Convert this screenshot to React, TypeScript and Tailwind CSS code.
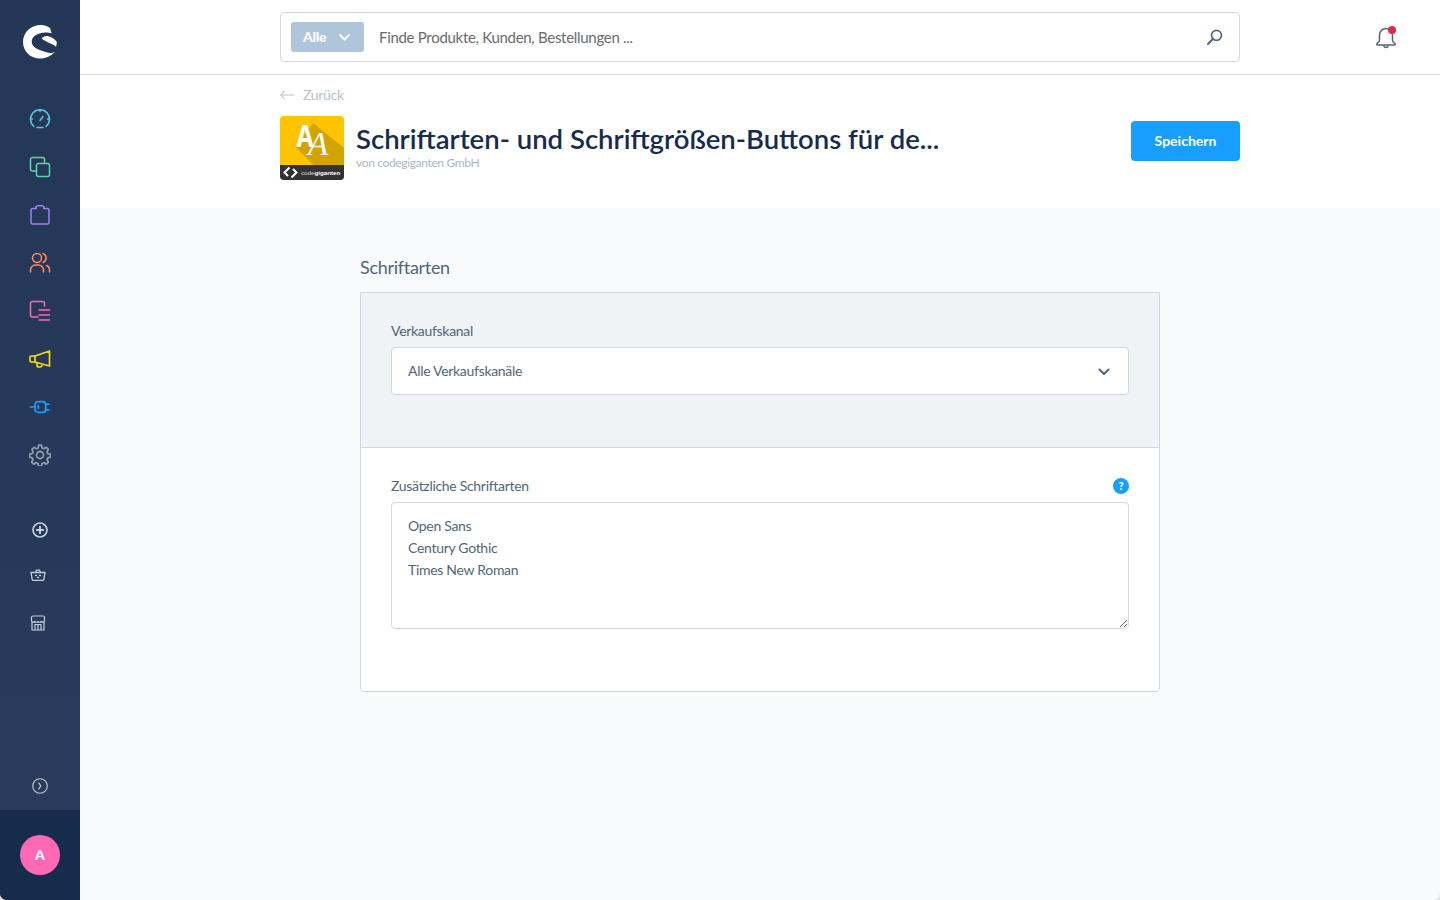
const font = "font-['Lato','Noto_Sans',sans-serif]";

function ShopLogo() {
  return (
    <svg width="36" height="36" viewBox="0 0 36 36" fill="#fff">
      <path d="M19 1C9 1 1 8 1 18c0 10 8 16.500 17 16.500 6 0 11-2.500 15-6.800-3 1.800-6.500 1.300-9 .300C16 26 9.700 23 9.700 17.700 9.700 12 17 8.500 23 8.500c3 0 5 .5 6.700.8L28 4c-2.500-2-6-3-9-3z" />
      <path d="M19.700 14.300C22 12 25 11.500 27 12.500c3 1 6 2.500 7.700 5.200.3 1.800-.2 3.300-.7 5C31 20 27 19 24.700 17.700c-2.200-1.200-4.200-1.900-5-3.400z" />
    </svg>
  );
}

function NavIcon({ color, width = 1.5, children }: { color: string; width?: number; children: React.ReactNode }) {
  return (
    <svg width="22" height="22" viewBox="0 0 22 22" fill="none" stroke={color} strokeWidth={width} strokeLinecap="round" strokeLinejoin="round">
      {children}
    </svg>
  );
}

function Sidebar() {
  return (
    <aside className="w-20 shrink-0 flex flex-col items-center bg-gradient-to-b from-[#243757] to-[#2a3b5c] rounded-bl-[7px] overflow-hidden">
      <div className="h-[108px] flex items-start pt-[24px] justify-center"><ShopLogo /></div>
      <nav className="flex flex-col items-center gap-[26px]">
        <NavIcon color="#57c7e8">
          <path d="M5 18.500A9.500 9.500 0 1 1 17 18.500" />
          <path d="M11 1.500v2M1.500 11h2M18.500 11h2M11 12.500l3-4M8 19.500h6" />
        </NavIcon>
        <NavIcon color="#57d9a3">
          <path d="M7 15H3.500a2 2 0 0 1-2-2V3.500a2 2 0 0 1 2-2h10a2 2 0 0 1 2 2V7" />
          <rect x="7.500" y="7.500" width="13" height="13" rx="2" />
        </NavIcon>
        <NavIcon color="#9a85ef">
          <path d="M7 4.500H3.500A1.500 1.500 0 0 0 2 6v12.500A1.500 1.500 0 0 0 3.500 20h15a1.500 1.500 0 0 0 1.500-1.500V6a1.500 1.500 0 0 0-1.500-1.500H15" />
          <path d="M7 4.500V3.500a1.800 1.800 0 0 1 1.800-1.800h4.400A1.800 1.800 0 0 1 15 3.500v1" />
        </NavIcon>
        <NavIcon color="#ff8a5c">
          <circle cx="8" cy="6" r="4.500" />
          <path d="M1.500 20v-2a5 5 0 0 1 5-5h3a5 5 0 0 1 5 5v2M14 1.500a4.800 4.800 0 0 1 0 9M17.500 13.500A4.500 4.500 0 0 1 20.500 18v2" />
        </NavIcon>
        <NavIcon color="#ff68b4">
          <path d="M9 17H3.500a2 2 0 0 1-2-2V3.500a2 2 0 0 1 2-2h10a2 2 0 0 1 2 2V6" />
          <path d="M10 10h10.500M10 15h10.500M10 20h10.500" />
        </NavIcon>
        <NavIcon color="#ffd700" width={1.7}>
          <path d="M20.500 3v15L6 14H2.500a1.500 1.500 0 0 1-1.500-1.500v-3A1.500 1.500 0 0 1 2.500 8H6z" />
          <path d="M6 8v6M8 15v2a2 2 0 0 0 2 2h1a2 2 0 0 0 2-1.500" />
        </NavIcon>
        <NavIcon color="#189eff" width={1.7}>
          <rect x="6" y="5.700" width="10.700" height="10.700" rx="3" />
          <path d="M1.500 11H6M16.700 8.200h3M16.700 13.800h3M9.300 9.700v2.600" />
        </NavIcon>
        <NavIcon color="#8c9bb0" width={1.8}>
          <circle cx="11" cy="11" r="3.500" />
          <path d="M9.500 1.200h3l.6 2.700 1.800.8 2.400-1.400 2.100 2.100-1.400 2.400.8 1.800 2.700.6v3l-2.700.6-.8 1.800 1.400 2.400-2.100 2.100-2.400-1.400-1.800.8-.6 2.700h-3l-.6-2.700-1.800-.8-2.400 1.400-2.100-2.100 1.400-2.400-.8-1.800-2.700-.6v-3l2.700-.6.8-1.800L3 5.400l2.100-2.100 2.400 1.400 1.800-.8z" />
        </NavIcon>
      </nav>
      <div className="flex flex-col items-center mt-[56px]">
        <svg width="16" height="16" viewBox="0 0 16 16" fill="none" stroke="#c3cedb" strokeWidth="1.700" strokeLinecap="round">
          <circle cx="8" cy="8" r="7" />
          <path d="M8 4.800v6.400M4.800 8h6.400" strokeWidth="2" />
        </svg>
        <svg width="16" height="12" viewBox="0 0 16 12" fill="none" stroke="#c3cedb" strokeWidth="1.300" strokeLinecap="round" strokeLinejoin="round" className="mt-[31px] mr-[4px]">
          <path d="M1 3.500h14l-1.200 7a1 1 0 0 1-1 .8H3.200a1 1 0 0 1-1-.8z" />
          <path d="M5.500 3.500 6.500 1.200h3l1 2.300M5.500 6.500h1M9.500 6.500h1M7.500 8.500h1" />
        </svg>
        <svg width="16" height="16" viewBox="0 0 16 16" fill="none" stroke="#c3cedb" strokeWidth="1.200" strokeLinejoin="round" className="mt-[34px] mr-[4px]">
          <path d="M1.500 5.500v-3a1.500 1.500 0 0 1 1.500-1.500h10a1.500 1.500 0 0 1 1.500 1.500v3c0 2-2.300 2-3.250 1-.9 1-2.400 1-3.250 0-.9 1-2.400 1-3.250 0-1 1-3.250 1-3.250-1z" />
          <path d="M2 7v8h12V7M5 15V9.500h6V15M8 9.500V15" />
        </svg>
      </div>
      <div className="mt-auto h-[57px] flex items-center justify-center pt-[9px]">
        <svg width="16" height="16" viewBox="0 0 16 16" fill="none" stroke="#c3cedb" strokeWidth="1.100" strokeLinecap="round" strokeLinejoin="round">
          <circle cx="8" cy="8" r="7.300" />
          <path d="M6.800 5 8.800 8l-2 3" strokeWidth="1.300" />
        </svg>
      </div>
      <div className="w-full h-[90px] bg-[#172b4d] flex items-center justify-center">
        <div className="w-10 h-10 rounded-full bg-[#ff68b4] text-white flex items-center justify-center font-black text-sm">A</div>
      </div>
    </aside>
  );
}

function TopBar() {
  return (
    <header className="h-[75px] shrink-0 bg-white border-b border-[#d1d9e0] relative flex justify-center items-start pt-3">
      <div className="w-[960px] h-[50px] border border-[#d1d9e0] rounded-[4px] flex items-center pl-2.5 pr-[16px] bg-white">
        <div className="w-[73px] h-[30px] rounded-[3px] bg-[#afc5dc] text-white text-sm font-black tracking-[-0.3px] flex items-center pl-3 gap-[13px] shrink-0">
          Alle
          <svg width="11" height="7" viewBox="0 0 11 7" fill="none" stroke="#fff" strokeWidth="1.800" strokeLinecap="round" strokeLinejoin="round">
            <path d="M1 1l4.500 4.500L10 1" />
          </svg>
        </div>
        <span className="ml-[15px] text-[15px] tracking-[-0.3px] text-[#6b6b6b] flex-1">Finde Produkte, Kunden, Bestellungen ...</span>
        <svg width="16" height="16" viewBox="0 0 16 16" fill="none" stroke="#52667a" strokeWidth="1.700" strokeLinecap="round">
          <circle cx="9.500" cy="6.300" r="5" />
          <path d="M5.800 10 1 15" strokeWidth="2" />
        </svg>
      </div>
      <div className="absolute right-[43px] top-[26px]">
        <svg width="22" height="23" viewBox="0 0 22 23" fill="none" stroke="#52667a" strokeWidth="1.500" strokeLinejoin="round">
          <path d="M4.500 9a6.500 6.500 0 0 1 13 0v5c0 2 1 2.500 2.500 3.500.5.500.3 1.500-.5 1.500h-17c-.8 0-1-1-.5-1.500C3.500 16.500 4.500 16 4.500 14z" />
          <path d="M9 19.500a2 2 0 0 0 4 0" />
        </svg>
        <span className="absolute top-0 right-[1px] w-2 h-2 rounded-full bg-[#de294c]" />
      </div>
    </header>
  );
}

function PluginLogo() {
  return (
    <svg width="64" height="64" viewBox="0 0 64 64" className="rounded-[4px] shrink-0">
      <rect width="64" height="64" fill="#ffc400" />
      <polygon points="16,31 33,7 64,32 64,49 33,49" fill="#d2a400" />
      <rect x="0" y="49" width="64" height="15" fill="#333" />
      <text x="16.500" y="31" fontFamily="'Liberation Mono', monospace" fontWeight="700" fontSize="34" fill="#fff" textLength="17" lengthAdjust="spacingAndGlyphs">A</text>
      <text x="38" y="39" fontFamily="'Liberation Serif', serif" fontStyle="italic" fontSize="33" fill="#fff" textAnchor="middle">A</text>
      <path d="M9.500 51.500 4.500 56.500l3.500 3.500M11.500 61.500l5-5-3.500-3.500" fill="none" stroke="#fff" strokeWidth="2" />
      <text x="21" y="59" fontFamily="'Liberation Sans', sans-serif" fontSize="6.200" fill="#ddd">code<tspan fontWeight="700" fill="#fff">giganten</tspan></text>
    </svg>
  );
}

function SmartBar() {
  return (
    <div className="h-[133px] shrink-0 bg-white flex justify-center">
      <div className="w-[960px]">
        <div className="h-[41px] pb-[2px] flex items-center gap-[9px] text-[#b6c2cf] text-sm tracking-[-0.3px]">
          <svg width="14" height="10" viewBox="0 0 14 10" fill="none" stroke="#b6c2cf" strokeWidth="1.100" strokeLinecap="round" strokeLinejoin="round">
            <path d="M13.500 5H.8M4.500 1 .8 5l3.700 4" />
          </svg>
          Zurück
        </div>
        <div className="flex items-center">
          <PluginLogo />
          <div className="ml-3 flex-1 -mt-[4px]">
            <h1 className="text-[27.5px] leading-[34px] font-semibold text-[#172b4d]">Schriftarten- und Schriftgrößen-Buttons für de...</h1>
            <div className="text-xs tracking-[-0.35px] text-[#a9b8c7] leading-[14px]">von codegiganten GmbH</div>
          </div>
          <button className="w-[109px] h-10 -mt-[14px] rounded-[4px] bg-[#189eff] text-white text-sm font-bold">Speichern</button>
        </div>
      </div>
    </div>
  );
}

function Card() {
  return (
    <div className="w-[800px] mx-auto">
      <h2 className="text-lg leading-[22px] tracking-[-0.3px] text-[#52667a] mb-[14px]">Schriftarten</h2>
      <div className="border border-[#d1d9e0] rounded-b-[4px] bg-white text-sm tracking-[-0.3px]">
        <div className="bg-[#f0f2f5] border-b border-[#d1d9e0] h-[155px] px-[30px] pt-[29px]">
          <label className="block leading-[17px] text-[#52667a] mb-2">Verkaufskanal</label>
          <div className="h-12 bg-white border border-[#d1d9e0] rounded-[4px] flex items-center justify-between pl-4 pr-[18px] text-[#52667a]">
            Alle Verkaufskanäle
            <svg width="12" height="8" viewBox="0 0 12 8" fill="none" stroke="#52667a" strokeWidth="2" strokeLinecap="round" strokeLinejoin="round" className="mt-px">
              <path d="M1.500 1.500 6 6l4.500-4.500" />
            </svg>
          </div>
        </div>
        <div className="h-[243px] px-[30px] pt-[29px]">
          <div className="flex items-center justify-between mb-2 h-[17px]">
            <label className="leading-[17px] text-[#52667a]">Zusätzliche Schriftarten</label>
            <span className="w-4 h-4 rounded-full bg-[#189eff] text-white text-[11px] font-black flex items-center justify-center">?</span>
          </div>
          <textarea
            className="block w-full h-[127px] border border-[#d1d9e0] rounded-[4px] px-4 py-3 leading-[22px] text-[#52667a] outline-none bg-white"
            defaultValue={"Open Sans\nCentury Gothic\nTimes New Roman"}
          />
        </div>
      </div>
    </div>
  );
}

export default function App() {
  return (
    <div className={`${font} w-[1440px] h-[900px] overflow-hidden flex bg-[#e4e4e4]`}>
      <Sidebar />
      <main className="flex-1 flex flex-col bg-[#f9fafb] rounded-br-[7px] overflow-hidden">
        <TopBar />
        <SmartBar />
        <div className="pt-[48px]">
          <Card />
        </div>
      </main>
    </div>
  );
}
